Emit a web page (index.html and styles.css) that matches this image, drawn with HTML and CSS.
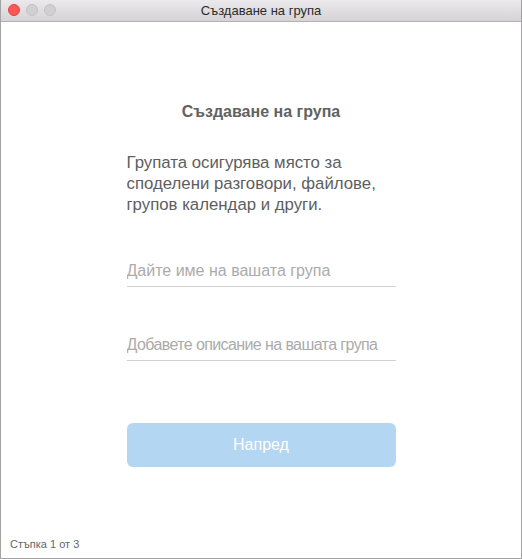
FILE: index.html
```html
<!DOCTYPE html>
<html lang="bg">
<head>
  <meta charset="UTF-8">
  <meta name="viewport" content="width=device-width, initial-scale=1.0">
  <title>Създаване на група</title>
  <link rel="stylesheet" href="styles.css">
</head>
<body>
  <div class="window">
    <div class="titlebar">
      <div class="lights">
        <span class="light close"></span>
        <span class="light"></span>
        <span class="light"></span>
      </div>
      <div class="title">Създаване на група</div>
    </div>
    <div class="content">
      <div class="form">
        <h1 class="heading">Създаване на група</h1>
        <p class="intro">Групата осигурява място за споделени разговори, файлове, групов календар и други.</p>
        <div class="field first">
          <input type="text" placeholder="Дайте име на вашата група">
        </div>
        <div class="field second">
          <input type="text" class="narrow" placeholder="Добавете описание на вашата група">
        </div>
        <button class="next" disabled>Напред</button>
      </div>
      <div class="step">Стъпка 1 от 3</div>
    </div>
  </div>
</body>
</html>
```

FILE: styles.css
```css
html, body {
  margin: 0;
  padding: 0;
}
body {
  font-family: "Liberation Sans", Arial, sans-serif;
  color: #555;
}
.window {
  width: 522px;
  height: 559px;
  box-sizing: border-box;
  border: 1px solid #a3a3a3;
  border-top: none;
  display: flex;
  flex-direction: column;
  background: #fff;
}
.titlebar {
  height: 21px;
  flex: none;
  position: relative;
  background: linear-gradient(#ebe9eb, #d5d3d5);
  border-bottom: 1px solid #b1b1b1;
  display: flex;
  align-items: center;
  justify-content: center;
}
.lights {
  position: absolute;
  left: 7px;
  top: 4px;
  display: flex;
  gap: 6px;
}
.light {
  width: 12px;
  height: 12px;
  border-radius: 50%;
  background: #d1cfd1;
  box-sizing: border-box;
  border: 1px solid #c5c3c5;
}
.light.close {
  background: #fc5753;
  border-color: #e0443e;
}
.title {
  font-size: 13px;
  color: #2a2a2a;
}
.content {
  flex: 1;
  display: flex;
  flex-direction: column;
}
.form {
  flex: 1;
  width: 269px;
  margin: 0 auto;
  display: flex;
  flex-direction: column;
}
.heading {
  margin: 81px 0 0;
  font-size: 16px;
  line-height: 18px;
  font-weight: bold;
  text-align: center;
  color: #626262;
}
.intro {
  margin: 31px 0 0;
  font-size: 16.8px;
  line-height: 21px;
  color: #5e5e5e;
}
.field {
  border-bottom: 1px solid #d2d2d2;
}
.field.first {
  margin-top: 46px;
}
.field.second {
  margin-top: 48px;
}
.field input {
  width: 100%;
  box-sizing: border-box;
  border: none;
  outline: none;
  padding: 0 0 5px;
  font-family: inherit;
  font-size: 16px;
  line-height: 20px;
  color: #555;
  background: transparent;
}
.field input::placeholder {
  color: #ababab;
}
.field input.narrow {
  letter-spacing: -0.6px;
}
.next {
  margin-top: 62px;
  height: 44px;
  border: none;
  border-radius: 6px;
  background: #b3d6f2;
  color: #fff;
  font-family: inherit;
  font-size: 16px;
}
.step {
  padding: 0 0 8px 9px;
  font-size: 11px;
  color: #666;
}
```
